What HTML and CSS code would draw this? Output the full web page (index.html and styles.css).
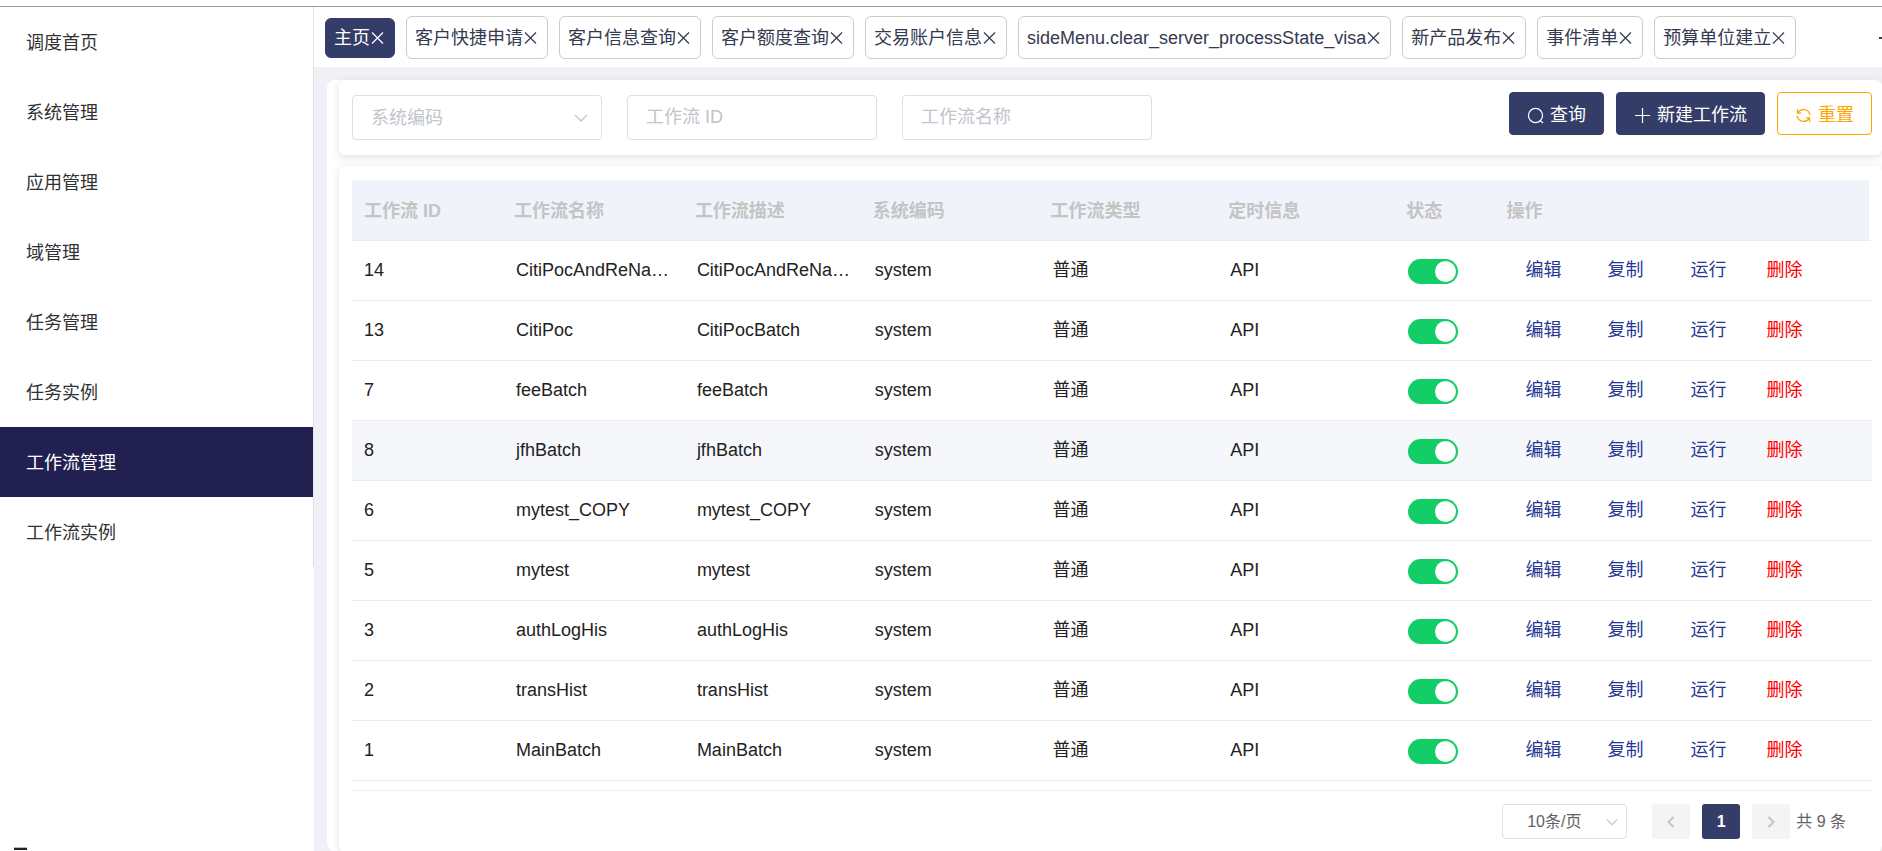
FILE: index.html
```html
<!DOCTYPE html>
<html lang="zh-CN">
<head>
<meta charset="utf-8">
<title>工作流管理</title>
<link rel="stylesheet" href="styles.css">
</head>
<body>
<svg class="sprite" aria-hidden="true">
  <symbol id="close" viewBox="0 0 16 16"><path d="M2 2.500 13 13.500M13 2.500 2 13.500"/></symbol>
  <symbol id="down" viewBox="0 0 16 16"><path d="M2 5l6 6 6-6"/></symbol>
  <symbol id="search" viewBox="0 0 18 18"><circle cx="9" cy="9" r="7.500"/><path d="M13.500 14l3.500 3"/></symbol>
  <symbol id="plus" viewBox="0 0 18 18"><path d="M9 1v16M1 9h16"/></symbol>
  <symbol id="refresh" viewBox="0 0 18 18"><path d="M2.500 2.500v4h4M3 6A7 7 0 0 1 15.800 8.500M15.500 15.500v-4h-4M15 12A7 7 0 0 1 2.200 9.500"/></symbol>
  <symbol id="left" viewBox="0 0 16 16"><path d="M10.500 3l-5 5 5 5"/></symbol>
  <symbol id="right" viewBox="0 0 16 16"><path d="M5.500 3l5 5-5 5"/></symbol>
</svg>
<div class="app">
  <aside class="sidebar">
    <nav class="menu">
      <a href="#">调度首页</a>
      <a href="#">系统管理</a>
      <a href="#">应用管理</a>
      <a href="#">域管理</a>
      <a href="#">任务管理</a>
      <a href="#">任务实例</a>
      <a href="#" class="active" aria-current="page">工作流管理</a>
      <a href="#">工作流实例</a>
    </nav>
    <button class="collapse" aria-label="收起菜单"><span class="collapse-bar"></span></button>
  </aside>
  <main class="main">
    <div class="tabs">
      <button class="tab current">主页<svg><use href="#close"/></svg></button>
      <button class="tab">客户快捷申请<svg><use href="#close"/></svg></button>
      <button class="tab">客户信息查询<svg><use href="#close"/></svg></button>
      <button class="tab">客户额度查询<svg><use href="#close"/></svg></button>
      <button class="tab">交易账户信息<svg><use href="#close"/></svg></button>
      <button class="tab">sideMenu.clear_server_processState_visa<svg><use href="#close"/></svg></button>
      <button class="tab">新产品发布<svg><use href="#close"/></svg></button>
      <button class="tab">事件清单<svg><use href="#close"/></svg></button>
      <button class="tab">预算单位建立<svg><use href="#close"/></svg></button>
      <button class="more" aria-label="更多"><span class="more-dot"></span></button>
    </div>
    <div class="page">
      <div class="board">
        <form class="filters card">
          <div class="fields">
            <div class="select-box">
              <select class="field placeholder" aria-label="系统编码"><option>系统编码</option></select>
              <svg><use href="#down"/></svg>
            </div>
            <input class="field" type="text" placeholder="工作流 ID" aria-label="工作流 ID">
            <input class="field" type="text" placeholder="工作流名称" aria-label="工作流名称">
          </div>
          <div class="buttons">
            <button type="button" class="btn"><svg><use href="#search"/></svg>查询</button>
            <button type="button" class="btn"><svg><use href="#plus"/></svg>新建工作流</button>
            <button type="button" class="btn reset"><svg><use href="#refresh"/></svg>重置</button>
          </div>
        </form>
        <section class="list card">
          <div class="table-wrap">
          <table>
            <colgroup><col class="c-id"><col class="c-name"><col class="c-desc"><col class="c-mid"><col class="c-mid"><col class="c-mid"><col class="c-state"><col></colgroup>
            <thead><tr><th>工作流 ID</th><th>工作流名称</th><th>工作流描述</th><th>系统编码</th><th>工作流类型</th><th>定时信息</th><th>状态</th><th>操作</th></tr></thead>
            <tbody>
              <tr><td>14</td><td>CitiPocAndReNa…</td><td>CitiPocAndReNa…</td><td>system</td><td>普通</td><td>API</td><td><input type="checkbox" class="switch" aria-label="状态 14" checked></td><td><div class="ops"><a href="#">编辑</a><a href="#">复制</a><a href="#">运行</a><a href="#" class="del">删除</a></div></td></tr>
              <tr><td>13</td><td>CitiPoc</td><td>CitiPocBatch</td><td>system</td><td>普通</td><td>API</td><td><input type="checkbox" class="switch" aria-label="状态 13" checked></td><td><div class="ops"><a href="#">编辑</a><a href="#">复制</a><a href="#">运行</a><a href="#" class="del">删除</a></div></td></tr>
              <tr><td>7</td><td>feeBatch</td><td>feeBatch</td><td>system</td><td>普通</td><td>API</td><td><input type="checkbox" class="switch" aria-label="状态 7" checked></td><td><div class="ops"><a href="#">编辑</a><a href="#">复制</a><a href="#">运行</a><a href="#" class="del">删除</a></div></td></tr>
              <tr class="hover"><td>8</td><td>jfhBatch</td><td>jfhBatch</td><td>system</td><td>普通</td><td>API</td><td><input type="checkbox" class="switch" aria-label="状态 8" checked></td><td><div class="ops"><a href="#">编辑</a><a href="#">复制</a><a href="#">运行</a><a href="#" class="del">删除</a></div></td></tr>
              <tr><td>6</td><td>mytest_COPY</td><td>mytest_COPY</td><td>system</td><td>普通</td><td>API</td><td><input type="checkbox" class="switch" aria-label="状态 6" checked></td><td><div class="ops"><a href="#">编辑</a><a href="#">复制</a><a href="#">运行</a><a href="#" class="del">删除</a></div></td></tr>
              <tr><td>5</td><td>mytest</td><td>mytest</td><td>system</td><td>普通</td><td>API</td><td><input type="checkbox" class="switch" aria-label="状态 5" checked></td><td><div class="ops"><a href="#">编辑</a><a href="#">复制</a><a href="#">运行</a><a href="#" class="del">删除</a></div></td></tr>
              <tr><td>3</td><td>authLogHis</td><td>authLogHis</td><td>system</td><td>普通</td><td>API</td><td><input type="checkbox" class="switch" aria-label="状态 3" checked></td><td><div class="ops"><a href="#">编辑</a><a href="#">复制</a><a href="#">运行</a><a href="#" class="del">删除</a></div></td></tr>
              <tr><td>2</td><td>transHist</td><td>transHist</td><td>system</td><td>普通</td><td>API</td><td><input type="checkbox" class="switch" aria-label="状态 2" checked></td><td><div class="ops"><a href="#">编辑</a><a href="#">复制</a><a href="#">运行</a><a href="#" class="del">删除</a></div></td></tr>
              <tr><td>1</td><td>MainBatch</td><td>MainBatch</td><td>system</td><td>普通</td><td>API</td><td><input type="checkbox" class="switch" aria-label="状态 1" checked></td><td><div class="ops"><a href="#">编辑</a><a href="#">复制</a><a href="#">运行</a><a href="#" class="del">删除</a></div></td></tr>
            </tbody>
          </table>
          </div>
          <div class="pager">
            <div class="select-box size-box">
              <select class="size" aria-label="每页条数"><option>10条/页</option></select>
              <svg><use href="#down"/></svg>
            </div>
            <button class="pg" aria-label="上一页" disabled><svg><use href="#left"/></svg></button>
            <button class="pg on">1</button>
            <button class="pg" aria-label="下一页" disabled><svg><use href="#right"/></svg></button>
            <span class="total">共 9 条</span>
          </div>
        </section>
      </div>
    </div>
  </main>
</div>
</body>
</html>
```
FILE: styles.css
```css
* { box-sizing: border-box; }
body {
  margin: 0;
  height: 100vh;
  overflow: hidden;
  padding-top: 6px;
  background: #fff;
  color: #222;
  font: 18px/24px "Liberation Sans", "Noto Sans CJK SC", sans-serif;
}
button, input, select { font: inherit; color: inherit; margin: 0; }
a { color: inherit; text-decoration: none; }
svg { fill: none; stroke: currentColor; width: 16px; height: 16px; flex: none; }
.sprite { position: absolute; width: 0; height: 0; }

.app { display: flex; height: 100%; border-top: 1px solid #999; }

.sidebar {
  width: 314px;
  flex: none;
  display: flex;
  flex-direction: column;
  justify-content: space-between;
}
.menu { border-right: 1px solid #e0e0e3; }
.menu a {
  display: flex;
  align-items: center;
  height: 70px;
  padding: 2px 26px 0;
  color: #303133;
}
.menu .active { background: #212051; color: #fff; }
.collapse { border: 0; background: none; padding: 0 14px; height: 4px; display: flex; }
.collapse-bar { width: 13px; height: 3px; background: #222; border-top: 1px solid #bbb; }

.main { flex: 1; min-width: 0; display: flex; flex-direction: column; }
.tabs {
  display: flex;
  align-items: center;
  gap: 11px;
  flex: none;
  height: 60px;
  padding: 1px 0 0 11px;
  overflow: hidden;
}
.tab {
  display: flex;
  align-items: center;
  flex: none;
  height: 43px;
  padding: 0 8px;
  border: 1px solid #ccc;
  border-radius: 6px;
  background: #fff;
  color: #343a4f;
  white-space: nowrap;
}
.tab svg { stroke-width: 1.2; }
.current { height: 40px; border-color: #343c68; background: #343c68; color: #fff; }
.more { margin-left: auto; padding: 0; border: 0; background: none; display: flex; }
.more-dot { width: 3px; height: 2px; background: #343a4f; }

.page { flex: 1; min-height: 0; padding: 13px 0 0 13px; background: #f0f1f6; }
.board {
  height: 100%;
  padding-left: 12px;
  background: #fff;
  border-radius: 8px;
  display: flex;
  flex-direction: column;
  gap: 11px;
}
.card { background: #fff; border-radius: 6px; box-shadow: 0 2px 8px rgba(0, 0, 0, .12); }

.filters { display: flex; justify-content: space-between; padding: 12px 10px 15px 13px; flex: none; }
.fields { display: flex; gap: 25px; padding-top: 3px; }
.field {
  width: 250px;
  height: 45px;
  padding: 0 18px;
  border: 1px solid #dcdfe6;
  border-radius: 4px;
  background: #fff;
  appearance: none;
}
.field::placeholder, .placeholder { color: #c0c4cc; opacity: 1; }
.select-box { display: grid; align-items: center; }
.select-box > * { grid-area: 1 / 1; }
.select-box svg { justify-self: end; margin-right: 13px; color: #c0c4cc; stroke-width: 1.3; pointer-events: none; }
.buttons { display: flex; gap: 12px; align-items: flex-start; }
.btn {
  display: flex;
  align-items: center;
  gap: 6px;
  height: 43px;
  padding: 3px 17px 0;
  border: 1px solid #343c68;
  border-radius: 4px;
  background: #343c68;
  color: #fff;
}
.btn svg { width: 17px; height: 17px; stroke-width: 1.3; }
.reset { background: #fff; border-color: #ffa500; color: #ffa500; }

.list { flex: 1; padding: 14px 10px 0 13px; }
.table-wrap { padding-bottom: 9px; border-bottom: 1px solid #ebeef5; }
table { width: 100%; table-layout: fixed; border-collapse: separate; border-spacing: 0; }
.c-id { width: 10%; }
.c-name { width: 11.9%; }
.c-desc { width: 11.7%; }
.c-mid { width: 11.7%; }
.c-state { width: 6.6%; }
th, td {
  height: 60px;
  padding: 0 12px;
  border-bottom: 1px solid #e9ecf6;
  text-align: left;
  white-space: nowrap;
}
th { height: 61px; padding: 2px 10px 0; background: #f0f3f9; color: #c4c4c4; font-weight: 700; }
th:first-child { padding-left: 12px; }
th:last-child { border-right: 3px solid #fff; }
td { padding-bottom: 2px; }
.hover td { background: #f5f7fb; }
.switch {
  display: block;
  appearance: none;
  width: 50px;
  height: 25px;
  margin-top: 4px;
  padding: 2px;
  border-radius: 13px;
  background: #c0c4cc;
}
.switch::before { content: ""; display: block; width: 21px; height: 21px; border-radius: 50%; background: #fff; }
.switch:checked { background: #13ce66; }
.switch:checked::before { margin-left: auto; }
.ops { display: grid; grid-template-columns: 82px 83px 76px auto; padding-left: 17px; color: #263791; }
.ops .del { color: #f00; }

.pager {
  display: flex;
  justify-content: flex-end;
  align-items: center;
  gap: 12px;
  padding: 13px 26px 13px 0;
  font-size: 16px;
  color: #606266;
}
.size {
  width: 125px;
  height: 35px;
  padding: 0 24px;
  border: 1px solid #dcdfe6;
  border-radius: 4px;
  background: #fff;
  appearance: none;
}
.size-box { margin-right: 13px; }
.size-box svg { width: 14px; height: 14px; margin-right: 8px; }
.pg {
  display: flex;
  align-items: center;
  justify-content: center;
  width: 38px;
  height: 35px;
  padding: 0;
  border: 0;
  border-radius: 3px;
  background: #f4f4f5;
  color: #c0c4cc;
  font-weight: 700;
}
.pg svg { stroke-width: 2; }
.on { background: #343c68; color: #fff; }
.total { margin-left: -6px; }
```
